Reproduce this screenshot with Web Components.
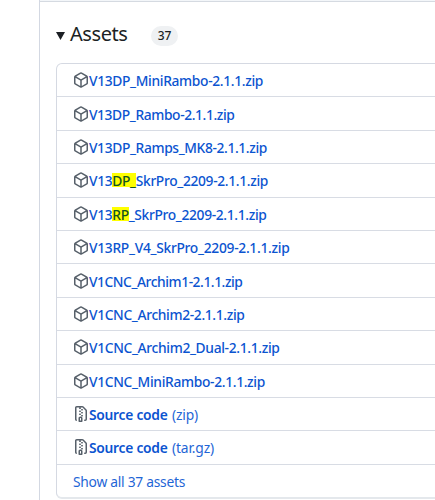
<!DOCTYPE html>
<html lang="en">
<head>
<meta charset="utf-8">
<title>Assets</title>
<style>
    html, body {
        margin: 0;
        height: 100%;
        overflow: hidden;
        background: #fff;
        font-family: "Noto Sans", "Open Sans", sans-serif;
    }
</style>
</head>
<body>
<release-page>
    <asset-heading slot="heading" count="37"><fit-text width="57.5">Assets</fit-text></asset-heading>
    <asset-row icon="cube"><fit-text width="174">V13DP_MiniRambo-2.1.1.zip</fit-text></asset-row>
    <asset-row icon="cube"><fit-text width="145.5">V13DP_Rambo-2.1.1.zip</fit-text></asset-row>
    <asset-row icon="cube"><fit-text width="178">V13DP_Ramps_MK8-2.1.1.zip</fit-text></asset-row>
    <asset-row icon="cube"><fit-text width="179">V13<mark>DP_</mark>SkrPro_2209-2.1.1.zip</fit-text></asset-row>
    <asset-row icon="cube"><fit-text width="177.5">V13<mark>RP</mark>_SkrPro_2209-2.1.1.zip</fit-text></asset-row>
    <asset-row icon="cube"><fit-text width="200.5">V13RP_V4_SkrPro_2209-2.1.1.zip</fit-text></asset-row>
    <asset-row icon="cube"><fit-text width="153.5">V1CNC_Archim1-2.1.1.zip</fit-text></asset-row>
    <asset-row icon="cube"><fit-text width="155.5">V1CNC_Archim2-2.1.1.zip</fit-text></asset-row>
    <asset-row icon="cube"><fit-text width="190.5">V1CNC_Archim2_Dual-2.1.1.zip</fit-text></asset-row>
    <asset-row icon="cube"><fit-text width="176">V1CNC_MiniRambo-2.1.1.zip</fit-text></asset-row>
    <asset-row icon="zip" strong><fit-text width="78.5">Source code</fit-text><fit-text slot="note" width="26">(zip)</fit-text></asset-row>
    <asset-row icon="zip" strong><fit-text width="78.5">Source code</fit-text><fit-text slot="note" width="42">(tar.gz)</fit-text></asset-row>
    <asset-row plain><fit-text width="112">Show all 37 assets</fit-text></asset-row>
</release-page>

<script>
    const icons = {
        cube: `<svg width="16" height="16" viewBox="0 0 16 16"><path d="m8.878.392 5.25 3.045c.54.314.872.89.872 1.514v6.098a1.75 1.75 0 0 1-.872 1.514l-5.25 3.045a1.75 1.75 0 0 1-1.756 0l-5.25-3.045A1.75 1.75 0 0 1 1 11.049V4.951c0-.624.332-1.201.872-1.514L7.122.392a1.75 1.75 0 0 1 1.756 0ZM7.875 1.69l-4.63 2.685L8 7.133l4.755-2.758-4.63-2.685a.248.248 0 0 0-.25 0ZM2.5 5.677v5.372c0 .09.047.171.125.216l4.625 2.683V8.432Zm6.25 8.271 4.625-2.683a.25.25 0 0 0 .125-.216V5.677L8.75 8.432Z"/></svg>`,
        zip: `<svg width="16" height="16" viewBox="0 0 16 16"><path d="M3.5 1.75v11.5c0 .09.048.173.126.217a.75.75 0 0 1-.752 1.298A1.748 1.748 0 0 1 2 13.25V1.75C2 .784 2.784 0 3.75 0h5.586c.464 0 .909.185 1.237.513l2.914 2.914c.329.328.513.773.513 1.237v8.586A1.75 1.75 0 0 1 12.25 15h-.5a.75.75 0 0 1 0-1.5h.5a.25.25 0 0 0 .25-.25V4.664a.25.25 0 0 0-.073-.177L9.513 1.573a.25.25 0 0 0-.177-.073H7.25a.75.75 0 0 1 0 1.5h-.5a.75.75 0 0 1 0-1.5h-3a.25.25 0 0 0-.25.25Zm3.75 8.75h.5c.966 0 1.75.784 1.75 1.75v3a.75.75 0 0 1-.75.75h-2.5a.75.75 0 0 1-.75-.75v-3c0-.966.784-1.75 1.75-1.75ZM6 5.25a.75.75 0 0 1 .75-.75h.5a.75.75 0 0 1 0 1.5h-.5A.75.75 0 0 1 6 5.25Zm.75 2.25h.5a.75.75 0 0 1 0 1.5h-.5a.75.75 0 0 1 0-1.5ZM8 6.75A.75.75 0 0 1 8.75 6h.5a.75.75 0 0 1 0 1.5h-.5A.75.75 0 0 1 8 6.75ZM8.75 3h.5a.75.75 0 0 1 0 1.5h-.5a.75.75 0 0 1 0-1.5ZM8 9.75A.75.75 0 0 1 8.75 9h.5a.75.75 0 0 1 0 1.5h-.5A.75.75 0 0 1 8 9.75Zm-1 2.5v2.25h1v-2.25a.25.25 0 0 0-.25-.25h-.5a.25.25 0 0 0-.25.25Z"/></svg>`
    };

    class ReleasePage extends HTMLElement {
        constructor() {
            super();
            this.attachShadow({mode: 'open'});
            this.shadowRoot.innerHTML = `
                <style>
                    :host { display: block; height: 500px; overflow: hidden; }
                    .main { height: 500px; margin-left: 39px; border-left: 1px solid #d3d8e2; }
                    .top { height: 1px; border-bottom: 1px solid #d5dae1; background: #f3f6f9; }
                    .list {
                        margin-left: 16px;
                        width: 420px;
                        box-sizing: border-box;
                        border: 1px solid #d5d9e2;
                        border-bottom: 2px solid #e4e8ec;
                        border-radius: 6px;
                    }
                </style>
                <div class="main">
                    <div class="top"></div>
                    <slot name="heading"></slot>
                    <div class="list"><slot></slot></div>
                </div>
            `;
        }
    }
    customElements.define("release-page", ReleasePage);

    class AssetHeading extends HTMLElement {
        constructor() {
            super();
            this.attachShadow({mode: 'open'});
            this.shadowRoot.innerHTML = `
                <style>
                    :host {
                        display: flex;
                        align-items: center;
                        height: 61px;
                        padding: 3px 0 0 16px;
                        box-sizing: border-box;
                        color: #1b1f24;
                        font-size: 20px;
                    }
                    svg { margin: 4px 5px 0 0; }
                    .title { margin-top: -1px; line-height: 26px; }
                    .count {
                        margin: 4px 0 0 23.5px;
                        width: 27px;
                        height: 20px;
                        border-radius: 10px;
                        background: #eff1f3;
                        font-size: 12px;
                        font-weight: 500;
                        line-height: 20px;
                        text-align: center;
                    }
                </style>
                <svg width="9" height="8" viewBox="0 0 9 8"><path d="M0 0h9L4.5 8z" fill="#1b1f24"/></svg>
                <span class="title"><slot></slot></span>
                <span class="count">${this.getAttribute("count")}</span>
            `;
        }
    }
    customElements.define("asset-heading", AssetHeading);

    class AssetRow extends HTMLElement {
        constructor() {
            super();
            this.attachShadow({mode: 'open'});
            this.shadowRoot.innerHTML = `
                <style>
                    :host {
                        display: flex;
                        align-items: center;
                        height: 33.4px;
                        padding-left: 16px;
                        box-sizing: border-box;
                        border-bottom: 1px solid #d8dce4;
                        color: #0b54d0;
                        font-size: 13.8px;
                        font-weight: 500;
                        line-height: 20px;
                        white-space: nowrap;
                    }
                    :host([strong]) { font-weight: 600; }
                    :host([plain]) { height: 32.4px; font-weight: 400; color: #1f66d6; border-bottom: 0; }
                    svg { display: block; fill: #57606a; }
                    .name { padding-top: 2px; }
                    .note { padding: 2px 0 0 4.5px; font-weight: 400; color: #1f66d6; }
                </style>
                ${icons[this.getAttribute("icon")] || ""}
                <span class="name"><slot></slot></span>
                <span class="note"><slot name="note"></slot></span>
            `;
        }
    }
    customElements.define("asset-row", AssetRow);

    // Spreads the letters so that the text takes up the given width
    class FitText extends HTMLElement {
        constructor() {
            super();
            this.attachShadow({mode: 'open'});
            this.shadowRoot.innerHTML = `
                <style>
                    :host { display: inline-block; white-space: nowrap; }
                    ::slotted(mark) {
                        color: #14541f;
                        background: linear-gradient(#ff0, #ff0) 0 2px / 100% 14px no-repeat;
                    }
                </style>
                <slot></slot>
            `;
        }

        connectedCallback() {
            const wanted = parseFloat(this.getAttribute("width"));
            const natural = this.getBoundingClientRect().width;
            this.style.letterSpacing = (wanted - natural) / this.textContent.length + "px";
        }
    }
    customElements.define("fit-text", FitText);
</script>
</body>
</html>
